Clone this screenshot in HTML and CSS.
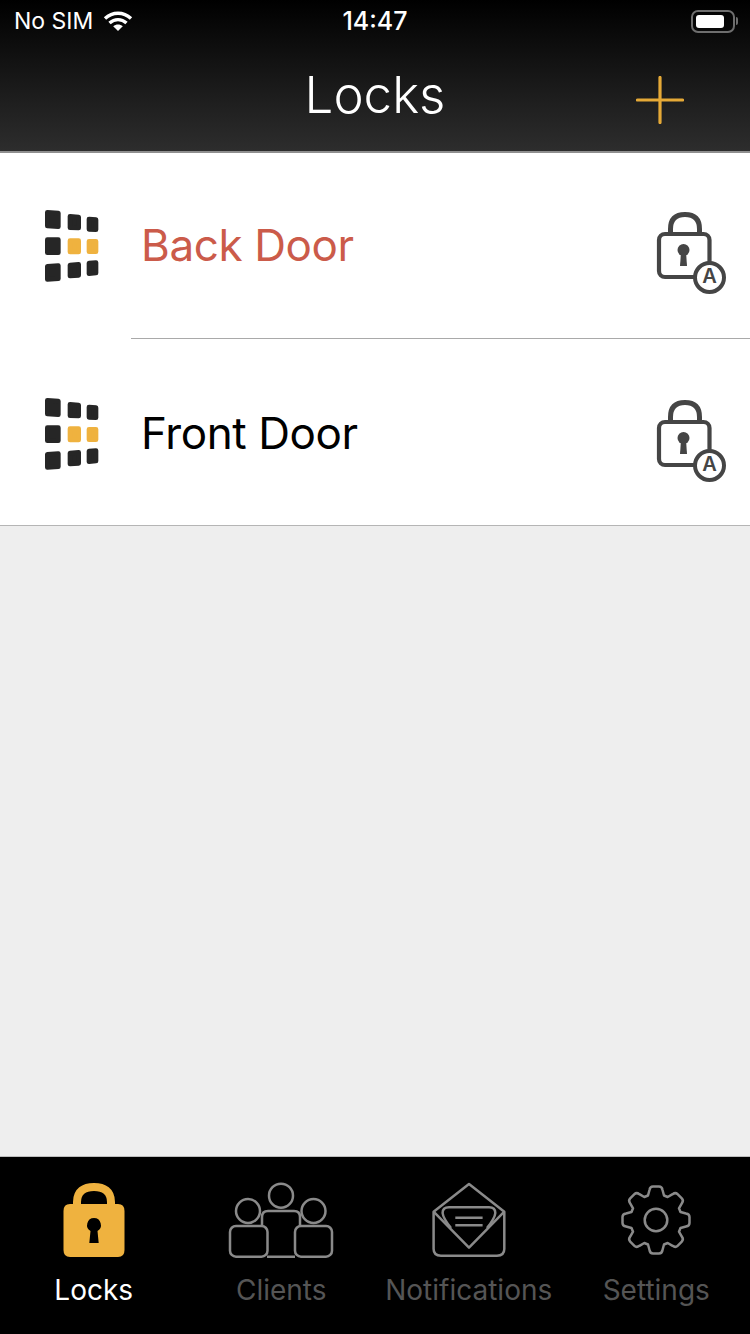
FILE: index.html
```html
<!DOCTYPE html>
<html lang="en">
<head>
    <meta charset="UTF-8">
    <meta name="viewport" content="width=device-width, initial-scale=1.0">
    <title>Locks</title>
    <link rel="stylesheet" href="styles.css">
</head>
<body>

    <svg class="defs" width="0" height="0">
        <symbol id="keypad" viewBox="0 0 270 300">
            <path class="key" d="M52 52 L85 54 L85 95 L52 93 Z"/>
            <path class="key" d="M120 64 L146 66 L146 99 L120 98 Z"/>
            <path class="key" d="M177 72 L198 74 L198 104 L177 103 Z"/>
            <path class="key" d="M52 134 L85 134 L85 173 L52 173 Z"/>
            <path class="key lit" d="M120 137 L146 137 L146 171 L120 171 Z"/>
            <path class="key lit" d="M177 139 L198 139 L198 170 L177 170 Z"/>
            <path class="key" d="M52 214 L85 212 L85 251 L52 253 Z"/>
            <path class="key" d="M120 210 L146 208 L146 241 L120 243 Z"/>
            <path class="key" d="M177 204 L198 203 L198 234 L177 236 Z"/>
        </symbol>
    </svg>

    <div class="app">
        <header class="top-bar">
            <div class="status-bar">
                <div class="status-left">
                    <span>No SIM</span>
                    <svg class="wifi" width="30" height="22" viewBox="0 0 30 22">
                        <path d="M2 8.500 C9.500 1.500 20.500 1.500 28 8.500 M6.500 13 C11.500 8.500 18.500 8.500 23.500 13" fill="none" stroke="#fff" stroke-width="3.400"/>
                        <path d="M10.200 16.300 C13 14 17 14 19.800 16.300 L15 21 Z" fill="#fff"/>
                    </svg>
                </div>
                <div class="status-time">14:47</div>
                <div class="status-right">
                    <div class="battery"><div class="battery-fill"></div></div>
                    <div class="battery-nub"></div>
                </div>
            </div>
            <div class="nav-bar">
                <h1 class="nav-title">Locks</h1>
                <svg class="add-btn" width="48" height="48" viewBox="0 0 48 48">
                    <path d="M1.500 24 H46.500 M24 1.500 V46.500" stroke="#e5a937" stroke-width="3.200" stroke-linecap="round"/>
                </svg>
            </div>
        </header>

        <main class="lock-list">
            <div class="lock-row">
                <svg class="keypad-icon"><use href="#keypad"/></svg>
                <span class="lock-name alert">Back Door</span>
                <svg class="auto-icon" viewBox="0 0 100 100">
                    <path class="auto-line thick" d="M30.500 32 V29 C30.500 19 36 14.500 45 14.500 C54 14.500 59.500 19 59.500 29 V32"/>
                    <rect class="auto-line" x="19" y="34" width="50.500" height="43" rx="6"/>
                    <circle class="auto-fill" cx="43.500" cy="50" r="6"/>
                    <path class="auto-fill" d="M41 52 H46 L47 66 H40 Z"/>
                    <circle class="auto-badge" cx="69.500" cy="77.500" r="14.500"/>
                    <text class="badge-letter" x="69.500" y="83">A</text>
                </svg>
            </div>
            <div class="lock-row">
                <svg class="keypad-icon"><use href="#keypad"/></svg>
                <span class="lock-name">Front Door</span>
                <svg class="auto-icon" viewBox="0 0 100 100">
                    <path class="auto-line thick" d="M30.500 32 V29 C30.500 19 36 14.500 45 14.500 C54 14.500 59.500 19 59.500 29 V32"/>
                    <rect class="auto-line" x="19" y="34" width="50.500" height="43" rx="6"/>
                    <circle class="auto-fill" cx="43.500" cy="50" r="6"/>
                    <path class="auto-fill" d="M41 52 H46 L47 66 H40 Z"/>
                    <circle class="auto-badge" cx="69.500" cy="77.500" r="14.500"/>
                    <text class="badge-letter" x="69.500" y="83">A</text>
                </svg>
            </div>
        </main>

        <nav class="tab-bar">
            <div class="tab active">
                <svg class="tab-icon" width="110" height="78" viewBox="0 0 110 78">
                    <path d="M38 26 V21 C38 10 45 6 55 6 C65 6 72 10 72 21 V26" fill="none" stroke="#efb23f" stroke-width="8"/>
                    <path d="M31 23 H79 Q85.500 23 85.500 30 V69 Q85.500 76 79 76 H31 Q24.500 76 24.500 69 V30 Q24.500 23 31 23 Z M55 37 A7 7 0 0 0 51.500 50 L50.300 62 H59.700 L58.500 50 A7 7 0 0 0 55 37 Z" fill="#efb23f" fill-rule="evenodd"/>
                </svg>
                <span class="tab-label">Locks</span>
            </div>
            <div class="tab">
                <svg class="tab-icon" width="110" height="78" viewBox="0 0 110 78">
                    <g class="tab-line">
                        <circle cx="55" cy="14.700" r="12"/>
                        <circle cx="22" cy="30" r="12"/>
                        <circle cx="87.500" cy="30" r="12"/>
                        <path d="M36 45 V36 Q36 30 42 30 H68 Q74 30 74 36 V45 M41 75.700 H69"/>
                        <rect x="4" y="45" width="37.500" height="30.700" rx="6"/>
                        <rect x="69" y="45" width="37" height="30.700" rx="6"/>
                    </g>
                </svg>
                <span class="tab-label">Clients</span>
            </div>
            <div class="tab">
                <svg class="tab-icon" width="110" height="78" viewBox="0 0 110 78">
                    <g class="tab-line">
                        <path d="M19.600 30.700 L55 3 L90.300 30.700 V68 Q90.300 74.700 83 74.700 H27 Q19.600 74.700 19.600 68 Z"/>
                        <path d="M19.600 30.700 L55 66.700 L90.300 30.700"/>
                        <path d="M37 47 Q29 37 28.600 32 Q28.600 26.300 35 26.300 H75 Q81.300 26.300 81.300 32 Q81 37 73 47"/>
                        <path d="M41.300 36.700 H68.600 M41.300 44.300 H68.600"/>
                    </g>
                </svg>
                <span class="tab-label">Notifications</span>
            </div>
            <div class="tab">
                <svg class="tab-icon" width="110" height="78" viewBox="-55 -39 110 78">
                    <g class="tab-line">
                        <path d="M-8 -24.500 L-6.500 -30 Q-6 -33.500 -3 -33.500 H3 Q6 -33.500 6.500 -30 L8 -24.500
                                 L11.670 -22.980 L16.620 -25.810 Q19.450 -27.930 21.570 -25.810 L25.810 -21.570 Q27.930 -19.450 25.810 -16.620 L22.980 -11.670
                                 L24.500 -8 L30 -6.500 Q33.500 -6 33.500 -3 V3 Q33.500 6 30 6.500 L24.500 8
                                 L22.980 11.670 L25.810 16.620 Q27.930 19.450 25.810 21.570 L21.570 25.810 Q19.450 27.930 16.620 25.810 L11.670 22.980
                                 L8 24.500 L6.500 30 Q6 33.500 3 33.500 H-3 Q-6 33.500 -6.500 30 L-8 24.500
                                 L-11.670 22.980 L-16.620 25.810 Q-19.450 27.930 -21.570 25.810 L-25.810 21.570 Q-27.930 19.450 -25.810 16.620 L-22.980 11.670
                                 L-24.500 8 L-30 6.500 Q-33.500 6 -33.500 3 V-3 Q-33.500 -6 -30 -6.500 L-24.500 -8
                                 L-22.980 -11.670 L-25.810 -16.620 Q-27.930 -19.450 -25.810 -21.570 L-21.570 -25.810 Q-19.450 -27.930 -16.620 -25.810 L-11.670 -22.980 Z"/>
                        <circle cx="0" cy="0" r="11.300"/>
                    </g>
                </svg>
                <span class="tab-label">Settings</span>
            </div>
        </nav>
    </div>

</body>
</html>
```

FILE: styles.css
```css
body {
    margin: 0;
    padding: 0;
    font-family: 'Inter', 'Liberation Sans', sans-serif;
    background-color: #eeeeee;
}

.defs {
    position: absolute;
}

.key {
    fill: #262626;
    stroke: #262626;
    stroke-width: 14;
    stroke-linejoin: round;
}

.key.lit {
    fill: #efb23f;
    stroke: #efb23f;
}

.app {
    display: flex;
    flex-direction: column;
    width: 750px;
    height: 1334px;
    overflow: hidden;
}

.top-bar {
    height: 151px;
    flex: none;
    background: linear-gradient(#000000, #2d2d2d);
    border-bottom: 2px solid #8f8f8f;
    color: #fff;
}

.status-bar {
    display: grid;
    grid-template-columns: 1fr auto 1fr;
    align-items: center;
    height: 42px;
    padding: 0 12px 0 14px;
    font-size: 23px;
}

.status-left {
    display: flex;
    align-items: center;
    gap: 10px;
}

.status-time {
    margin-left: -2px;
    font-size: 25px;
    font-weight: 500;
}

.status-right {
    display: flex;
    align-items: center;
    justify-content: flex-end;
    gap: 1px;
}

.battery {
    box-sizing: border-box;
    width: 44px;
    height: 23px;
    padding: 3px;
    border: 2px solid #6e6e6e;
    border-radius: 7px;
}

.battery-fill {
    width: 28px;
    height: 100%;
    background-color: #fff;
    border-radius: 3px;
}

.battery-nub {
    width: 2px;
    height: 8px;
    background-color: #6e6e6e;
    border-radius: 0 2px 2px 0;
}

.nav-bar {
    position: relative;
    display: flex;
    justify-content: center;
    align-items: center;
    height: 105px;
}

.nav-title {
    margin: 0;
    font-size: 51px;
    font-weight: 300;
}

.add-btn {
    position: absolute;
    left: 636px;
    top: 34px;
}

.lock-list {
    background-color: #fff;
    border-bottom: 1px solid #b5b5b5;
}

.lock-row {
    position: relative;
    box-sizing: border-box;
    display: flex;
    align-items: center;
    height: 186px;
    padding: 0 10px 2px 30px;
}

.lock-row + .lock-row {
    padding: 2px 10px 0 30px;
}

.lock-row:first-child::after {
    content: "";
    position: absolute;
    left: 131px;
    right: 0;
    bottom: 0;
    height: 1px;
    background-color: #a9a9a9;
}

.keypad-icon {
    width: 90px;
    height: 100px;
    flex: none;
}

.lock-name {
    flex: 1;
    margin-left: 21px;
    font-size: 44px;
    letter-spacing: -0.4px;
    color: #000;
}

.lock-name.alert {
    color: #cb5b4a;
}

.auto-icon {
    width: 100px;
    height: 100px;
    flex: none;
    margin-top: 9px;
}

.auto-line {
    fill: none;
    stroke: #454545;
    stroke-width: 4.2;
}

.auto-line.thick {
    stroke-width: 5;
}

.auto-fill {
    fill: #454545;
}

.auto-badge {
    fill: #fff;
    stroke: #454545;
    stroke-width: 4;
}

.badge-letter {
    font-family: 'Inter', sans-serif;
    font-size: 20px;
    font-weight: 600;
    fill: #454545;
    text-anchor: middle;
}

.tab-bar {
    display: grid;
    grid-template-columns: repeat(4, 1fr);
    margin-top: auto;
    height: 177px;
    flex: none;
    background-color: #000;
    border-top: 1px solid #bdbdbd;
}

.tab {
    display: flex;
    flex-direction: column;
    align-items: center;
    padding-top: 24px;
}

.tab-line {
    fill: none;
    stroke: #8a8a8a;
    stroke-width: 2.5;
    stroke-linejoin: round;
}

.tab-label {
    margin-top: 14px;
    font-size: 28px;
    color: #555;
}

.tab.active .tab-label {
    color: #fff;
}
```
